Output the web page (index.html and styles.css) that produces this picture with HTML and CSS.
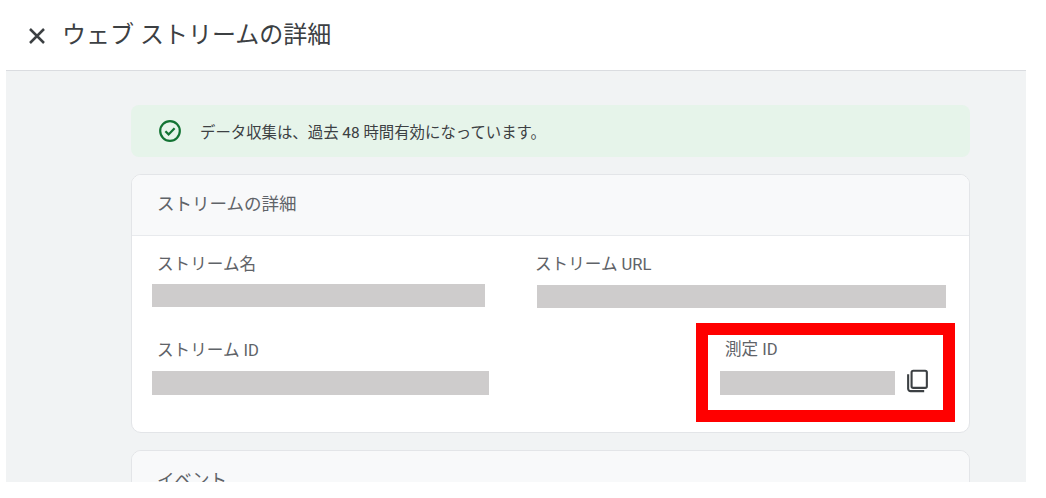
FILE: index.html
```html
<!DOCTYPE html>
<html lang="ja">
<head>
<meta charset="utf-8">
<title>ウェブ ストリームの詳細</title>
<link rel="stylesheet" href="styles.css">
</head>
<body>
<div class="app">
  <header class="topbar">
    <svg class="close" viewBox="0 0 16 16" width="16" height="16"><path d="M1 1 L15 15 M15 1 L1 15" stroke="#3c4043" stroke-width="2.5" fill="none"/></svg>
    <h1 class="title">ウェブ ストリームの詳細</h1>
  </header>
  <main class="content">
    <div class="banner">
      <svg class="ok" viewBox="0 0 22 22" width="22" height="22"><circle cx="11" cy="11" r="9.8" fill="none" stroke="#137333" stroke-width="2.2"/><path d="M6.4 11.2 L9.6 14.4 L15.6 8.2" fill="none" stroke="#137333" stroke-width="2.2"/></svg>
      <span class="banner-text">データ収集は、過去 48 時間有効になっています。</span>
    </div>
    <section class="card">
      <div class="card-head">ストリームの詳細</div>
      <div class="card-body">
        <div class="field">
          <div class="label">ストリーム名</div>
          <div class="bar bar-name"></div>
        </div>
        <div class="field field-url">
          <div class="label">ストリーム URL</div>
          <div class="bar bar-url"></div>
        </div>
        <div class="field field-id">
          <div class="label">ストリーム ID</div>
          <div class="bar bar-id"></div>
        </div>
        <div class="highlight">
          <div class="label label-mid">測定 ID</div>
          <div class="mid-row">
            <div class="bar bar-mid"></div>
            <svg class="copy" viewBox="0 0 22 24" width="21" height="24"><path d="M1.2 5 V20 A2.6 2.6 0 0 0 3.8 22.6 H18" fill="none" stroke="#3c4043" stroke-width="2.2"/><rect x="4.8" y="1.2" width="16" height="18" rx="1.8" fill="none" stroke="#3c4043" stroke-width="2.2"/></svg>
          </div>
        </div>
      </div>
    </section>
    <section class="card card-next">
      <div class="card-head">イベント</div>
    </section>
  </main>
</div>
</body>
</html>
```
FILE: styles.css
```css
* { box-sizing: border-box; }
html, body { margin: 0; padding: 0; background: #fff; }
body {
  width: 1046px;
  height: 498px;
  overflow: hidden;
  font-family: Roboto, "Noto Sans CJK JP", sans-serif;
}
.app {
  width: 1020px;
  height: 482px;
  margin-left: 6px;
  display: flex;
  flex-direction: column;
  overflow: hidden;
}
.topbar {
  flex: none;
  height: 71px;
  display: flex;
  align-items: center;
  gap: 17px;
  padding: 0 0 1px 23px;
  border-bottom: 1px solid #dadce0;
  background: #fff;
}
.close { flex: none; margin-top: 2px; }
.title {
  margin: 0;
  font-size: 24px;
  font-weight: 400;
  line-height: 32px;
  color: #3c4043;
}
.content {
  flex: 1;
  min-height: 0;
  overflow: hidden;
  background: #f1f3f4;
  padding: 34px 56px 0 125px;
}
.banner {
  height: 52px;
  display: flex;
  align-items: center;
  gap: 19px;
  padding-left: 28px;
  background: #e6f4ea;
  border-radius: 8px;
}
.ok { flex: none; }
.banner-text {
  font-size: 15.4px;
  color: #3c4043;
}
.card {
  margin-top: 17px;
  height: 259px;
  background: #fff;
  border: 1px solid #e3e5e8;
  border-radius: 10px;
  overflow: hidden;
}
.card-next { background: #f8f9fa; height: 120px; }
.card-head {
  height: 61px;
  padding: 16px 0 0 25px;
  font-size: 17.5px;
  line-height: 26px;
  color: #5f6368;
  background: #f8f9fa;
  border-bottom: 1px solid #e8eaed;
}
.card-body {
  position: relative;
  display: grid;
  grid-template-columns: 405px 1fr;
  grid-template-rows: 86px 1fr;
  padding: 16px 23px 0 20px;
  height: 196px;
}
.label {
  padding-left: 5px;
  font-size: 16.6px;
  line-height: 26px;
  color: #5f6368;
}
.bar { background: #cecccc; }
.bar-name { width: 333px; height: 23px; margin-top: 6px; }
.field-url { margin-left: -20px; }
.field-url .label { padding-left: 0; margin-left: -2px; }
.bar-url { width: 409px; height: 23px; margin-top: 7px; }
.bar-id { width: 337px; height: 24px; margin-top: 7px; }
.field-id { grid-column: 1; }
.highlight {
  position: absolute;
  left: 564px;
  top: 87px;
  width: 259px;
  height: 99px;
  border: 12px solid #f00;
  background: #fff;
  padding: 2px 0 0 12px;
}
.mid-row {
  display: flex;
  align-items: flex-start;
  gap: 12px;
  margin-top: 8px;
}
.bar-mid { width: 175px; height: 24px; }
.copy { flex: none; margin-top: -2px; }
```
